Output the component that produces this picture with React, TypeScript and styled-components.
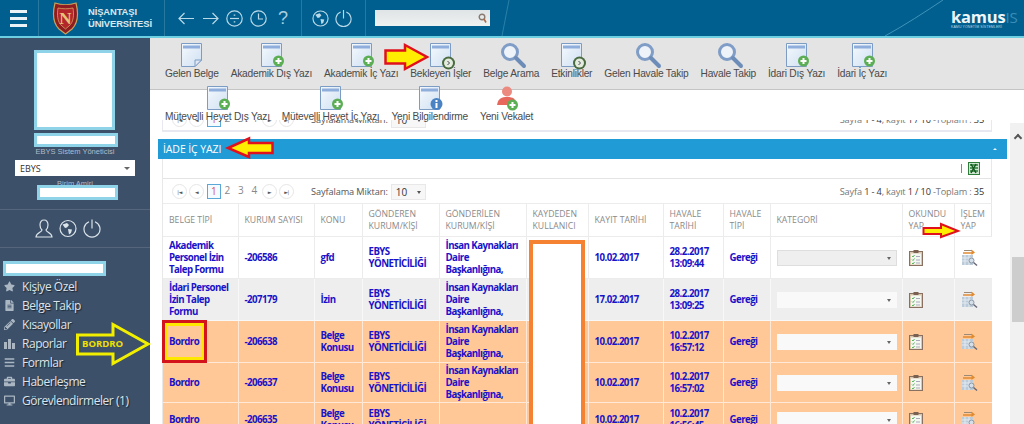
import React from "react";
import styled, { createGlobalStyle } from "styled-components";
import { FaStar, FaPencilAlt, FaBars, FaBriefcase, FaDesktop, FaFileAlt } from "react-icons/fa";

const Global = createGlobalStyle`
  html, body { margin: 0; padding: 0; width: 1024px; height: 424px; overflow: hidden; background: #fff; }
  * { box-sizing: border-box; }
`;

const Root = styled.div`
  position: relative; width: 1024px; height: 424px; overflow: hidden;
  display: flex; flex-direction: column; font-family: "Liberation Sans", Arial, sans-serif;
`;

/* ---------- header ---------- */
const Header = styled.header`
  position: relative; flex: none; height: 38px; display: flex; align-items: center;
  background: #005f8e; border-bottom: 2px solid #6ccfe2; overflow: hidden;
`;
const HeaderCell = styled.div<{ $w: number }>`
  position: relative; z-index: 1; flex: none; width: ${p => p.$w}px; height: 36px; display: flex; align-items: center;
  border-right: 1px solid rgba(255,255,255,.16);
`;
const MenuCell = styled(HeaderCell)`justify-content: center; padding-right: 1px;`;
const LogoCell = styled(HeaderCell)`padding-left: 13px; gap: 9px;`;
const NavCell = styled(HeaderCell)`padding-left: 13px; gap: 7px;`;
const PowerCell = styled(HeaderCell)`padding-left: 10px; gap: 6px;`;
const SearchCell = styled.div`position: relative; z-index: 1; padding-left: 9px; display: flex;`;
const Burger = styled.div`
  width: 17px; height: 17px; display: flex; flex-direction: column; justify-content: space-between;
  & > i { display: block; height: 3px; background: #e8f2f7; }
`;
const UniName = styled.div`
  color: #d9e8f0; font-size: 9.4px; font-weight: 700; line-height: 12px; white-space: nowrap; letter-spacing: -.1px;
`;
const Question = styled.span`
  width: 12px; text-align: center; color: #a9cfe0; font-size: 18px; line-height: 20px; margin-left: 3px;
`;
const SearchBox = styled.div`
  width: 115px; height: 16px; background: linear-gradient(#dfe4e6, #f0f1f1); display: flex; align-items: center; justify-content: flex-end; padding-right: 3px;
`;
const Swoosh = styled.svg`position: absolute; left: 0; top: 0; width: 1024px; height: 36px;`;
const Kamus = styled.div`
  position: absolute; z-index: 1; right: 9px; top: 9px; width: 64px; color: #eef6fa; font-size: 16.500px; line-height: 16px; font-weight: 700;
  white-space: nowrap; letter-spacing: -.2px; font-family: "Open Sans", sans-serif;
  & > b { color: #3a8db8; font-weight: 400; font-size: 15px; }
`;
const KamusSub = styled.div`
  color: #b9d6e4; font-size: 3.5px; line-height: 4px; font-family: "Liberation Sans", sans-serif; font-weight: 400; letter-spacing: .1px;
`;

/* ---------- layout ---------- */
const Body = styled.div`flex: 1; display: flex; min-height: 0;`;
const Sidebar = styled.aside`
  flex: none; width: 150px; background: #3c5069; display: flex; flex-direction: column; color: #d5dee6;
`;
const Main = styled.main`flex: 1; min-width: 0; display: flex; flex-direction: column; background: #fff;`;

/* ---------- sidebar ---------- */
const Mask = styled.div<{ $w: number; $h: number; $l: number; $t: number }>`
  flex: none; position: relative; width: ${p => p.$w}px; height: ${p => p.$h}px; margin: ${p => p.$t}px 0 0 ${p => p.$l}px;
  background: #fff; border: 3px solid #8ed3e8;
`;
const Role = styled.div`
  flex: none; text-align: center; width: 150px; font-size: 7.5px; line-height: 9px; color: #aebccb;
`;
const SubRole = styled(Role)`line-height: 10px; margin-top: 3px;`;
const BranchSelect = styled.div`
  flex: none; width: 120px; height: 16px; margin: 4px 0 0 15px; background: #fff; color: #333; display: flex; align-items: center;
  justify-content: space-between; padding: 0 5px; font: 9px "Open Sans", sans-serif;
  &::after { content: ""; border: 3px solid transparent; border-top: 3px solid #666; margin-top: 3px; }
`;
const SideLine = styled.div<{ $t: number }>`flex: none; height: 1px; margin-top: ${p => p.$t}px; background: rgba(255,255,255,.13);`;
const SideIcons = styled.div`flex: none; height: 37px; padding-left: 35px; display: flex; align-items: center; gap: 6px;`;
const Menu = styled.nav`flex: none; margin-top: 1px; display: flex; flex-direction: column;`;
const MenuRow = styled.div`
  height: 19px; display: flex; align-items: center; padding-left: 4px; gap: 7px; font-size: 12px; color: #dce4ea; white-space: nowrap;
  text-shadow: 1px 1px 1px rgba(0,0,0,.55); font-family: "Open Sans", sans-serif; letter-spacing: -.45px;
  & > svg { flex: none; width: 11px; height: 11px; color: #aab6c2; }
`;

/* ---------- toolbar ---------- */
const ToolRow = styled.div`
  flex: none; position: relative; z-index: 2; display: flex; padding-left: 15px; gap: 12px; font-size: 10px; color: #444;
`;
const ToolTop = styled(ToolRow)`height: 52px; padding-top: 5px; background: #e4e4e4; border-bottom: 1px solid #c4c4c4;`;
const ToolBottom = styled(ToolRow)`height: 30px; margin-top: 0;`;
const Tool = styled.div<{ $up?: boolean }>`
  display: flex; flex-direction: column; align-items: center; height: 38px; margin-top: ${p => (p.$up ? -4 : 0)}px;
  & > svg { flex: none; width: 21px; height: 24px; overflow: visible; }
`;
const ToolLabel = styled.span`margin-top: 1px; line-height: 12px; white-space: nowrap; color: #4a4a4a; font-size: 10.2px; letter-spacing: -.22px;`;

/* ---------- content ---------- */
const Scroller = styled.div`flex: 1; min-height: 0; display: flex;`;
const Content = styled.div`flex: 1; min-width: 0; padding-left: 8px; display: flex; flex-direction: column; font-family: "Open Sans", sans-serif;`;
const Scrollbar = styled.div`
  flex: none; width: 14px; margin-top: 3px; background: #f1f1f1; display: flex; flex-direction: column; align-items: center; padding-left: 1px;
`;
const ScrollArrow = styled.div`
  margin-top: 12px; width: 6px; height: 6px; border: solid #555; border-width: 2px 0 0 2px; transform: rotate(45deg);
`;
const ScrollThumb = styled.div`margin-top: 116px; width: 12px; height: 65px; background: #cdcdcd;`;
const GhostPanel = styled.div`
  flex: none; width: 830px; height: 12px; margin-left: 4px; overflow: hidden; background: #fff;
  border: 1px solid #e8e8f0; border-top: 0; border-bottom-width: 2px;
`;
const GhostInner = styled.div`margin-top: -13px;`;
const SectionBar = styled.div`
  flex: none; width: 849px; height: 20px; margin-top: 7px; background: #219bd6; color: #fff; font-size: 10.5px; display: flex;
  align-items: center; justify-content: space-between; padding: 0 10px 0 5px; letter-spacing: -.1px;
`;
const Caret = styled.span`border: 2.5px solid transparent; border-bottom: 2.5px solid #e6f4fb; margin-bottom: 2px;`;
const Panel = styled.section`flex: 1; min-height: 0; width: 830px; margin-left: 4px; border-left: 1px solid #e8e8e8; border-right: 1px solid #e8e8e8;`;
const ActionBar = styled.div`
  height: 20px; display: flex; align-items: center; justify-content: flex-end; padding-right: 11px; gap: 6px; border-bottom: 1px solid #e4e4e4;
`;
const Sep = styled.span`width: 1px; height: 9px; background: #888;`;
const PagerRow = styled.div`
  height: 24px; padding: 1px 7px 0 9px; display: flex; align-items: center; color: #555; font-size: 9.2px; white-space: nowrap;
`;
const PagerBtn = styled.span`
  flex: none; width: 15px; height: 15px; border-radius: 50%; border: 1px solid #e6e6e6; margin-right: 2px; display: flex; align-items: center; justify-content: center;
  color: #555; font-size: 5px; letter-spacing: -.5px; font-family: "DejaVu Sans", sans-serif;
`;
const PageNum = styled.span<{ $on?: boolean }>`
  flex: none; width: 13.5px; height: 15px; text-align: center; line-height: 13px; font-size: 10px; color: #888;
  ${p => p.$on && "border: 1px solid #5aa8d8; color: #d0555a; background:#f4fbff;"}
`;
const Pages = styled.div`display: flex; margin: 0 1px 0 1px; align-items: center;`;
const PageSizeLabel = styled.span`margin-left: 15px; letter-spacing: -.1px;`;
const PageSize = styled.span`
  width: 35px; height: 16px; margin-left: 3px; background: #f7f7f7; border: 1px solid #e8e8e8; display: flex; align-items: center; justify-content: space-between;
  padding: 0 4px 0 4px; font-size: 10px; color: #333;
  &::after { content: ""; border: 2.5px solid transparent; border-top: 3px solid #555; margin-top: 3px; }
`;
const PagerInfo = styled.span`margin-left: auto; color: #777; letter-spacing: -.15px; & > b { font-weight: 400; color: #333; }`;

const Table = styled.table`
  border-collapse: collapse; table-layout: fixed; width: 829px; font-size: 9.7px; line-height: 12px;
`;
const Th = styled.th<{ $w: number }>`
  width: ${p => p.$w}px; height: 33px; padding: 0 2px 0 6px; text-align: left; font-weight: 400; color: #8a8a8a; border: 1px solid #ececec; font-size: 8.7px;
  border-width: 1px 1px 1px 0; &:last-child { border-right: 0; }
`;
const Tr = styled.tr<{ $bg: string; $h: number }>`
  background: ${p => p.$bg}; height: ${p => p.$h}px;
`;
const Td = styled.td<{ $line: string }>`
  padding: 0 0 0 6px; font-weight: 700; color: #1a12c8; border-right: 1px solid ${p => p.$line}; border-bottom: 1px solid ${p => p.$line}; vertical-align: middle;
  letter-spacing: -.55px; &:last-child { border-right: 0; }
`;
const Cat = styled.div<{ $first?: boolean }>`
  width: 120px; height: 16px; background: ${p => (p.$first ? "#efefef" : "#f9f9f9")}; border: 1px solid ${p => (p.$first ? "#dedede" : "transparent")};
  display: flex; align-items: center; justify-content: flex-end; padding-right: 5px;
  &::after { content: ""; border: 2.5px solid transparent; border-top: 3px solid #666; margin-top: 3px; }
`;
const CellIcon = styled.svg`display: block; overflow: visible;`;

/* ---------- annotations over the page ---------- */
const Overlay = styled.svg`position: absolute; left: 0; top: 0; width: 1024px; height: 424px; pointer-events: none; z-index: 5;`;
const UserCover = styled.div`
  position: absolute; z-index: 4; left: 529px; top: 240px; width: 56px; height: 200px; background: #fff; border: 4px solid #f58233;
`;
const BordroBox = styled.div`
  position: absolute; z-index: 4; left: 162px; top: 320px; width: 45px; height: 43px; border: 3px solid #d4141c; outline: 3px solid #ffe800; outline-offset: -6px;
`;
const BordroTag = styled.span`
  position: absolute; z-index: 6; left: 82px; top: 338px; color: #f0e000; font-weight: 700; font-size: 9.5px; line-height: 12px; font-family: "Open Sans", sans-serif;
`;

/* ---------- drawings ---------- */
type B = "plus" | "next" | "info" | "fold";
const Doc = ({ badge }: { badge: B }) => (
  <svg viewBox="0 0 21 24">
    <defs>
      <linearGradient id="pg" x1="0" y1="0" x2="1" y2="1"><stop offset="0" stopColor="#f5f9fd" /><stop offset="1" stopColor="#cfe0f2" /></linearGradient>
    </defs>
    <path d={badge === "fold" ? "M.5.5H20.5V17L14 23.5H.5Z" : "M.5.5H20.5V23.5H.5Z"} fill="url(#pg)" stroke="#7d9cc4" />
    <rect x="2" y="2.5" width="17" height="3" fill="#8faedb" />
    {badge === "fold" && <path d="M20.5 17H14V23.5Z" fill="#dfe8f3" stroke="#7d9cc4" />}
    {badge === "plus" && (<g><circle cx="17.5" cy="18" r="5.5" fill="#5cae54" /><path d="M17.5 15V21M14.5 18H20.5" stroke="#fff" strokeWidth="2" /></g>)}
    {badge === "next" && (<g><circle cx="18.5" cy="20" r="6.5" fill="#4a6a40" /><circle cx="18.5" cy="20" r="4.5" fill="#e4ecde" /><path d="M17.5 18L19.5 20L17.5 22" stroke="#445" fill="none" /></g>)}
    {badge === "info" && (<g><circle cx="17.5" cy="18" r="6" fill="#4a82c4" /><rect x="16.5" y="17" width="2" height="5" fill="#fff" /><rect x="16.5" y="14" width="2" height="2" fill="#fff" /></g>)}
  </svg>
);
const Lens = () => (
  <svg viewBox="0 0 21 24">
    <circle cx="9" cy="9" r="7.5" fill="#eef3f9" stroke="#7f9dc6" strokeWidth="3" />
    <path d="M15 15L23 23" stroke="#6d8db8" strokeWidth="4" strokeLinecap="round" />
  </svg>
);
const PersonPlus = () => (
  <svg viewBox="0 0 21 24">
    <circle cx="11" cy="5.5" r="5" fill="#ec8a80" />
    <path d="M1 19C2 12 6 11 11 11S20 12 21 19Z" fill="#e8675c" />
    <circle cx="16.5" cy="19" r="5.5" fill="#5cae54" />
    <path d="M16.5 16V22M13.5 19H19.5" stroke="#fff" strokeWidth="2" />
  </svg>
);
const Line = { fill: "none", stroke: "currentColor", strokeWidth: 1.2 } as const;
const NavIcon = styled.svg`flex: none; width: 17px; height: 17px; color: #b9d9e8;`;
const SideIcon = styled(NavIcon)`width: 18px; height: 19px; color: #dbe3ea;`;
const Back = () => <NavIcon viewBox="0 0 17 17" {...Line}><path d="M1 8.5H16M6.5 3L1 8.5L6.5 14" /></NavIcon>;
const Forward = () => <NavIcon viewBox="0 0 17 17" {...Line}><path d="M1 8.5H16M10.5 3L16 8.5L10.5 14" /></NavIcon>;
const DivideI = () => <NavIcon viewBox="0 0 17 17" {...Line}><circle cx="8.5" cy="8.5" r="7.7" /><path d="M4 8.5H13" /><path d="M8.500 4.500V5.800M8.500 11.200V12.500" strokeWidth="1.6" /></NavIcon>;
const ClockI = () => <NavIcon viewBox="0 0 17 17" {...Line}><circle cx="8.5" cy="8.5" r="7.7" /><path d="M8.5 3.5V9H13" /></NavIcon>;
const GlobeShape = () => (
  <>
    <circle cx="9" cy="9" r="8" {...Line} />
    <path d="M3.5 5L8 3.5L10 5.5L8 8L6 8.5ZM9 9.5L13 10L12 13.5L10 15Z" fill="currentColor" />
  </>
);
const PowerShape = () => (
  <>
    <path d="M6 2.2A8 8 0 1 0 12 2.2" {...Line} />
    <path d="M9 0V9" {...Line} />
  </>
);
const GlobeN = () => <NavIcon viewBox="0 0 18 18"><GlobeShape /></NavIcon>;
const PowerN = () => <NavIcon viewBox="0 0 18 18"><PowerShape /></NavIcon>;
const Logo = () => (
  <svg width="27" height="33" viewBox="0 0 27 33">
    <path d="M3 1C9 3 18 3 24 1C26 9 27 20 20 27L13.5 32L7 27C0 20 1 9 3 1Z" fill="#8e1c20" stroke="#caa25a" strokeWidth="1.2" />
    <path d="M6 6C11 7 16 7 21 6C22 12 22 20 17 24L13.5 27L10 24C5 20 5 12 6 6Z" fill="#b3272a" stroke="#d8b46a" strokeWidth=".7" />
    <text x="13.5" y="22" textAnchor="middle" fontFamily="Liberation Serif, serif" fontSize="17" fontWeight="700" fill="#e5c477">N</text>
  </svg>
);
const Rapor = () => (
  <svg viewBox="0 0 11 11" fill="currentColor"><rect x="0" y="4" width="3" height="7" /><rect x="4" y="1" width="3" height="10" /><rect x="8" y="5" width="3" height="6" /></svg>
);
const Clipboard = () => (
  <CellIcon width="14" height="16" viewBox="0 0 14 16">
    <rect x=".5" y="1.5" width="13" height="14" fill="#d8c8b0" stroke="#8a7060" />
    <rect x="2" y="3.5" width="10" height="11" fill="#f5f8f2" />
    <rect x="4.5" y="0" width="5" height="3" fill="#7a6050" />
    <path d="M3 6L4 7L5.5 5M3 9.5L4 10.5L5.5 8.5M3 13L4 14L5.5 12" stroke="#58b85a" fill="none" />
    <path d="M7 6.5H11M7 10H11M7 13H11" stroke="#aab" />
  </CellIcon>
);
const Process = () => (
  <CellIcon width="17" height="17" viewBox="0 0 17 17">
    <path d="M2 4H11" stroke="#e08a30" strokeWidth="1.5" /><path d="M3 1.5H11" stroke="#9b8a78" /><path d="M10.5 0.5L14 3.5L10.5 6" fill="#e08a30" />
    <rect x="1" y="6" width="11" height="10" fill="#bccbd9" />
    <path d="M1 9H12M1 12H12M4 6V16M8 6V16" stroke="#e3eaf1" />
    <circle cx="10.5" cy="11.500" r="2.5" fill="#d4dfe9" stroke="#8a97a5" />
    <path d="M12.500 13.500L16 16.500" stroke="#667" strokeWidth="1.500" />
  </CellIcon>
);
const Excel = () => (
  <CellIcon width="12" height="13" viewBox="0 0 12 13">
    <rect x=".5" y=".5" width="11" height="12" fill="#cfe6d0" stroke="#2f7d3a" />
    <path d="M2 3H10M2 6H10M2 9H10" stroke="#2f7d3a" strokeWidth="1.4" />
    <path d="M3 2L8 11M8 2L3 11" stroke="#14591f" strokeWidth="1.5" />
  </CellIcon>
);

/* ---------- data ---------- */
const topTools: [string, React.ReactNode][] = [
  ["Gelen Belge", <Doc badge="fold" />],
  ["Akademik Dış Yazı", <Doc badge="plus" />],
  ["Akademik İç Yazı", <Doc badge="plus" />],
  ["Bekleyen İşler", <Doc badge="next" />],
  ["Belge Arama", <Lens />],
  ["Etkinlikler", <Doc badge="next" />],
  ["Gelen Havale Takip", <Lens />],
  ["Havale Takip", <Lens />],
  ["İdari Dış Yazı", <Doc badge="plus" />],
  ["İdari İç Yazı", <Doc badge="plus" />],
];
const bottomTools: [string, React.ReactNode][] = [
  ["Mütevelli Heyet Dış Yazı", <Doc badge="plus" />],
  ["Mütevelli Heyet İç Yazı", <Doc badge="plus" />],
  ["Yeni Bilgilendirme", <Doc badge="info" />],
  ["Yeni Vekalet", <PersonPlus />],
];
const menu: [string, React.ReactNode][] = [
  ["Kişiye Özel", <FaStar />],
  ["Belge Takip", <FaFileAlt />],
  ["Kısayollar", <FaPencilAlt />],
  ["Raporlar", <Rapor />],
  ["Formlar", <FaBars />],
  ["Haberleşme", <FaBriefcase />],
  ["Görevlendirmeler (1)", <FaDesktop />],
];
const cols: [string, number][] = [
  ["BELGE TİPİ", 75], ["KURUM SAYISI", 76], ["KONU", 48], ["GÖNDEREN KURUM/KİŞİ", 77], ["GÖNDERİLEN KURUM/KİŞİ", 87],
  ["KAYDEDEN KULLANICI", 62], ["KAYIT TARİHİ", 75], ["HAVALE TARİHİ", 60], ["HAVALE TİPİ", 47], ["KATEGORİ", 132], ["OKUNDU YAP", 52], ["İŞLEM YAP", 38],
];
const WHITE = "#ffffff", GRAY = "#eeeeee", ORANGE = "#ffc896";
const ins = "İnsan Kaynakları Daire Başkanlığına,";
const rows = [
  { bg: WHITE, h: 42, line: "#ececec", c: ["Akademik Personel İzin Talep Formu", "-206586", "gfd", "EBYS YÖNETİCİLİĞİ", ins, "10.02.2017", "28.2.2017 13:09:44"] },
  { bg: GRAY, h: 42, line: "#f8f8f8", c: ["İdari Personel İzin Talep Formu", "-207179", "İzin", "EBYS YÖNETİCİLİĞİ", ins, "17.02.2017", "28.2.2017 13:09:25"] },
  { bg: ORANGE, h: 42, line: "#ffe9d6", c: ["Bordro", "-206638", "Belge Konusu", "EBYS YÖNETİCİLİĞİ", ins, "10.02.2017", "10.2.2017 16:57:12"] },
  { bg: ORANGE, h: 40, line: "#ffe9d6", c: ["Bordro", "-206637", "Belge Konusu", "EBYS YÖNETİCİLİĞİ", ins, "10.02.2017", "10.2.2017 16:57:02"] },
  { bg: ORANGE, h: 34, line: "#ffe9d6", c: ["Bordro", "-206635", "Belge Konusu", "EBYS YÖNETİCİLİĞİ", "", "10.02.2017", "10.2.2017 16:56:45"] },
];

const Pager = () => (
  <PagerRow>
    <PagerBtn>|◄</PagerBtn><PagerBtn>◄</PagerBtn>
    <Pages><PageNum $on>1</PageNum><PageNum>2</PageNum><PageNum>3</PageNum><PageNum>4</PageNum></Pages>
    <PagerBtn>►</PagerBtn><PagerBtn>►|</PagerBtn>
    <PageSizeLabel>Sayfalama Miktarı:</PageSizeLabel>
    <PageSize>10</PageSize>
    <PagerInfo>Sayfa <b>1 - 4</b>, kayıt <b>1 / 10</b> -Toplam : <b>35</b></PagerInfo>
  </PagerRow>
);

export default function App() {
  return (
    <Root>
      <Global />
      <Header>
        <Swoosh viewBox="0 0 1024 36">
          <path d="M885 36C905 25 925 12 943 0" stroke="#3f93ba" strokeWidth="1" fill="none" />
          <path d="M502 36L509 0" stroke="#2a80a8" strokeWidth="1" fill="none" />
        </Swoosh>
        <MenuCell $w={39}><Burger><i /><i /><i /></Burger></MenuCell>
        <LogoCell $w={126}><Logo /><UniName>NİŞANTAŞI<br />ÜNİVERSİTESİ</UniName></LogoCell>
        <NavCell $w={137}><Back /><Forward /><DivideI /><ClockI /><Question>?</Question></NavCell>
        <PowerCell $w={64}><GlobeN /><PowerN /></PowerCell>
        <SearchCell>
          <SearchBox>
            <svg width="9" height="10" viewBox="0 0 9 10"><circle cx="4" cy="4" r="2.8" fill="none" stroke="#8a7a70" strokeWidth="1.4" /><path d="M6 6L8 9.5" stroke="#b06a4a" strokeWidth="1.6" /></svg>
          </SearchBox>
        </SearchCell>
        <Kamus>kamus<b>IS</b><KamusSub>KAMU YÖNETİM SİSTEMLERİ</KamusSub></Kamus>
      </Header>
      <Body>
        <Sidebar>
          <Mask $w={81} $h={80} $l={34} $t={12} />
          <Mask $w={84} $h={14} $l={34} $t={3} />
          <Role>EBYS Sistem Yöneticisi</Role>
          <BranchSelect>EBYS</BranchSelect>
          <SubRole>Birim Amiri</SubRole>
          <Mask $w={81} $h={15} $l={37} $t={-4} />
          <SideLine $t={9} />
          <SideIcons>
            <SideIcon viewBox="0 0 18 19" {...Line}><path d="M9 1C6 1 5 3.5 5 6S6 10 7 11C7 13 1 14 1 18H17C17 14 11 13 11 11C12 10 13 8.500 13 6S12 1 9 1Z" /></SideIcon>
            <SideIcon viewBox="0 0 18 18"><GlobeShape /></SideIcon>
            <SideIcon viewBox="0 0 18 18"><PowerShape /></SideIcon>
          </SideIcons>
          <SideLine $t={0} />
          <Mask $w={103} $h={15} $l={3} $t={13} />
          <Menu>
            {menu.map(([t, i]) => <MenuRow key={t}>{i}<span>{t}</span></MenuRow>)}
          </Menu>
        </Sidebar>
        <Main>
          <ToolTop>
            {topTools.map(([t, i]) => <Tool key={t}>{i}<ToolLabel>{t}</ToolLabel></Tool>)}
          </ToolTop>
          <ToolBottom>
            {bottomTools.map(([t, i]) => <Tool key={t} $up>{i}<ToolLabel>{t}</ToolLabel></Tool>)}
          </ToolBottom>
          <Scroller>
            <Content>
              <GhostPanel><GhostInner><Pager /></GhostInner></GhostPanel>
              <SectionBar>İADE İÇ YAZI<Caret /></SectionBar>
              <Panel>
                <ActionBar><Sep /><Excel /></ActionBar>
                <Pager />
                <Table>
                  <thead>
                    <tr>{cols.map(([t, w]) => <Th key={t} $w={w}>{t}</Th>)}</tr>
                  </thead>
                  <tbody>
                    {rows.map((r, i) => (
                      <Tr key={i} $bg={r.bg} $h={r.h}>
                        {r.c.slice(0, 5).map((v, j) => <Td key={j} $line={r.line}>{v}</Td>)}
                        <Td $line={r.line} />
                        {r.c.slice(5).map((v, j) => <Td key={j} $line={r.line}>{v}</Td>)}
                        <Td $line={r.line}>Gereği</Td>
                        <Td $line={r.line}><Cat $first={i === 0} /></Td>
                        <Td $line={r.line}><Clipboard /></Td>
                        <Td $line={r.line}><Process /></Td>
                      </Tr>
                    ))}
                  </tbody>
                </Table>
              </Panel>
            </Content>
            <Scrollbar><ScrollArrow /><ScrollThumb /></Scrollbar>
          </Scroller>
        </Main>
      </Body>

      <UserCover />
      <BordroBox />
      <BordroTag>BORDRO</BordroTag>
      <Overlay viewBox="0 0 1024 424">
        <polygon points="385.500,50.500 405,50.500 405,45 427,57 405,69 405,63.500 385.500,63.500" fill="#ffee00" stroke="#e0101c" strokeWidth="2.500" />
        <polygon points="272.500,143 249,143 249,138.500 228,148 249,157 249,153 272.500,153" fill="#ffee00" stroke="#e0101c" strokeWidth="2.500" />
        <polygon points="923.500,228 941,228 941,224 958,231 941,237 941,234 923.500,234" fill="#ffee00" stroke="#e0101c" strokeWidth="2" />
        <polygon points="77.500,335 113,335 113,324.500 148,344 113,363.500 113,354 77.500,354" fill="none" stroke="#f2ee00" strokeWidth="3" />
      </Overlay>
    </Root>
  );
}
